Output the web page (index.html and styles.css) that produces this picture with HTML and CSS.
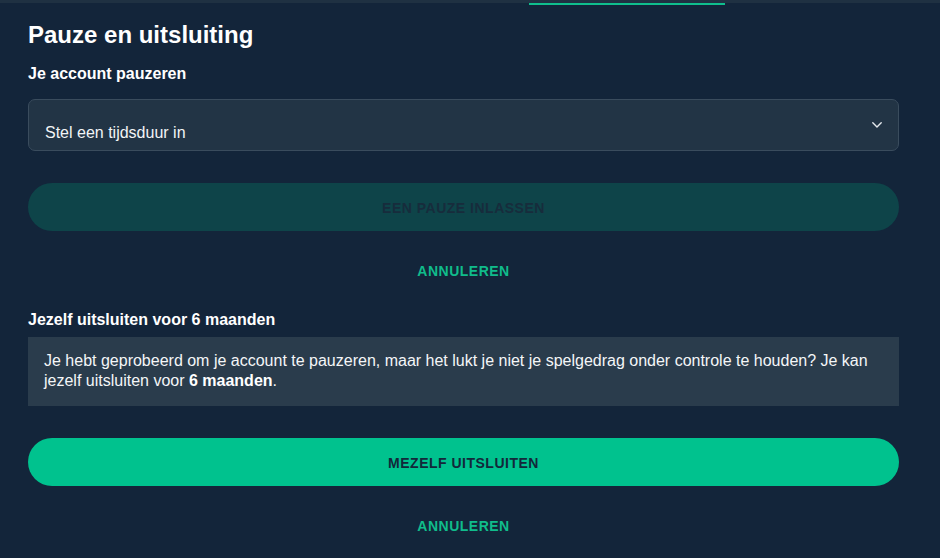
FILE: index.html
```html
<!DOCTYPE html>
<html lang="nl">
<head>
<meta charset="utf-8">
<title>Pauze en uitsluiting</title>
<link rel="stylesheet" href="styles.css">
</head>
<body>
<div class="tabbar">
  <div class="tabbar-strip"></div>
  <div class="tabbar-indicator"></div>
</div>
<main class="content">
  <h1 class="title">Pauze en uitsluiting</h1>

  <h2 class="section-label">Je account pauzeren</h2>
  <div class="select">
    <span class="select-text">Stel een tijdsduur in</span>
    <svg class="select-chevron" width="10" height="6" viewBox="0 0 10 6" aria-hidden="true">
      <polyline points="0.8,0.8 5,5 9.2,0.8" fill="none" stroke="#e4e8ec" stroke-width="1.4" stroke-linecap="round" stroke-linejoin="round"/>
    </svg>
  </div>
  <button class="btn btn-disabled" type="button">EEN PAUZE INLASSEN</button>
  <button class="btn-link" type="button">ANNULEREN</button>

  <h2 class="section-label section-label-2">Jezelf uitsluiten voor 6 maanden</h2>
  <p class="info">Je hebt geprobeerd om je account te pauzeren, maar het lukt je niet je spelgedrag onder controle te houden? Je kan jezelf uitsluiten voor <b class="info-strong">6 maanden</b>.</p>
  <button class="btn btn-primary" type="button">MEZELF UITSLUITEN</button>
  <button class="btn-link" type="button">ANNULEREN</button>
</main>
</body>
</html>
```

FILE: styles.css
```css
* { box-sizing: border-box; }

html, body {
  margin: 0;
  padding: 0;
  background: #13253a;
  color: #ffffff;
  font-family: "Liberation Sans", Arial, sans-serif;
  overflow: hidden;
}

.tabbar {
  display: flex;
  flex-direction: column;
}

.tabbar-strip {
  height: 3px;
  background: #1f3142;
}

.tabbar-indicator {
  margin-left: 529px;
  width: 196px;
  height: 2px;
  background: #0fbf8d;
}

.content {
  display: flex;
  flex-direction: column;
  padding: 0 41px 0 28px;
}

.title {
  margin: 16px 0 0;
  font-size: 24px;
  line-height: 28px;
  font-weight: 700;
}

.section-label {
  margin: 15px 0 0;
  font-size: 16px;
  line-height: 20px;
  font-weight: 700;
}

.section-label-2 {
  margin-top: 15px;
}

.select {
  margin-top: 15px;
  height: 52px;
  border: 1px solid #3a4c5d;
  border-radius: 7px;
  background: #223445;
  padding: 23px 16px 7px 16px;
  display: flex;
  align-items: flex-start;
  justify-content: space-between;
}

.select-text {
  font-size: 16px;
  line-height: 20px;
  color: #f2f4f6;
}

.select-chevron {
  margin-top: -1px;
  display: block;
}

.btn {
  margin-top: 32px;
  height: 48px;
  border: 0;
  border-radius: 24px;
  font-family: "Liberation Sans", Arial, sans-serif;
  font-size: 14px;
  font-weight: 700;
  letter-spacing: 0.5px;
  display: flex;
  align-items: center;
  justify-content: center;
  padding: 2px 0 0;
  width: 100%;
}

.btn-disabled {
  background: #0e4449;
  color: #172c3c;
}

.btn-primary {
  background: #00c28e;
  color: #13283a;
}

.btn-link {
  margin-top: 16px;
  height: 48px;
  border: 0;
  background: transparent;
  color: #10bc8b;
  font-family: "Liberation Sans", Arial, sans-serif;
  font-size: 14px;
  font-weight: 700;
  letter-spacing: 0.5px;
  padding: 0;
  width: 100%;
}

.info {
  margin: 7px 0 0;
  background: #2a3c4c;
  padding: 14px 16px 15px;
  font-size: 16px;
  line-height: 20px;
  color: #f4f6f8;
}

.info-strong {
  font-weight: 700;
  color: #ffffff;
}
```
